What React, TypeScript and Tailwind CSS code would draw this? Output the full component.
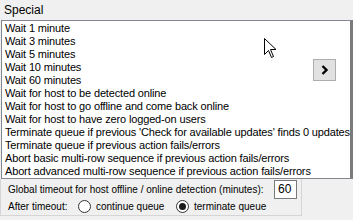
import React from "react";

const items = [
  "Wait 1 minute",
  "Wait 3 minutes",
  "Wait 5 minutes",
  "Wait 10 minutes",
  "Wait 60 minutes",
  "Wait for host to be detected online",
  "Wait for host to go offline and come back online",
  "Wait for host to have zero logged-on users",
  "Terminate queue if previous 'Check for available updates' finds 0 updates",
  "Terminate queue if previous action fails/errors",
  "Abort basic multi-row sequence if previous action fails/errors",
  "Abort advanced multi-row sequence if previous action fails/errors",
];

function Radio({ checked }: { checked?: boolean }) {
  return (
    <span className="w-[13px] h-[13px] rounded-full border border-[#333] bg-white flex items-center justify-center">
      {checked && <span className="w-[7px] h-[7px] rounded-full bg-[#1a1a1a]" />}
    </span>
  );
}

export default function App() {
  return (
    <div
      className="w-[353px] h-[220px] bg-[#f0f0f0] overflow-hidden relative text-black"
      style={{ fontFamily: '"Liberation Sans", Arial, sans-serif' }}
    >
      <div className="h-[20px] pl-[4px] pt-[3px] text-[12px] leading-[14px]">Special</div>
      <div className="relative ml-[1px] w-[352px] h-[159px] bg-white border border-[#828790] border-r-[3px] border-r-[#7a7a7a]">
        <div className="pt-[1px] pl-[3px] text-[11px] leading-[13px] tracking-[-0.15px]">
          {items.map((t) => (
            <div key={t} className="whitespace-nowrap h-[13px]">
              {t}
            </div>
          ))}
        </div>
        <button className="absolute left-[311px] top-[38px] w-[23px] h-[22px] bg-[#e1e1e1] border border-[#adadad] flex items-center justify-center">
          <svg width="8" height="10" viewBox="0 0 8 10">
            <path d="M1.5 1 L5.5 5 L1.5 9" stroke="#000" strokeWidth="2.4" fill="none" />
          </svg>
        </button>
        <svg className="absolute left-[262px] top-[17px]" width="14" height="21" viewBox="0 0 14 21">
          <path
            d="M0.5 0.5 L0.5 16.5 L4.5 12.5 L7.5 19.5 L9.5 18.5 L6.5 11.5 L12 11.5 Z"
            fill="#fff"
            stroke="#000"
            strokeWidth="1"
          />
        </svg>
      </div>
      <div className="w-[302px] h-[37px] border-l border-r border-b border-[#d5d5d5] pl-[7px] pt-[1px] text-[10px]">
        <div className="flex items-center h-[18px]">
          <span className="w-[266px]">Global timeout for host offline / online detection (minutes):</span>
          <span className="w-[23px] h-[19px] bg-white border border-[#7a7a7a] text-[12px] flex items-center pl-[3px]">60</span>
        </div>
        <div className="flex items-center h-[16px]">
          <span className="w-[70px]">After timeout:</span>
          <Radio />
          <span className="ml-[5px] w-[80px]">continue queue</span>
          <Radio checked />
          <span className="ml-[5px]">terminate queue</span>
        </div>
      </div>
    </div>
  );
}
